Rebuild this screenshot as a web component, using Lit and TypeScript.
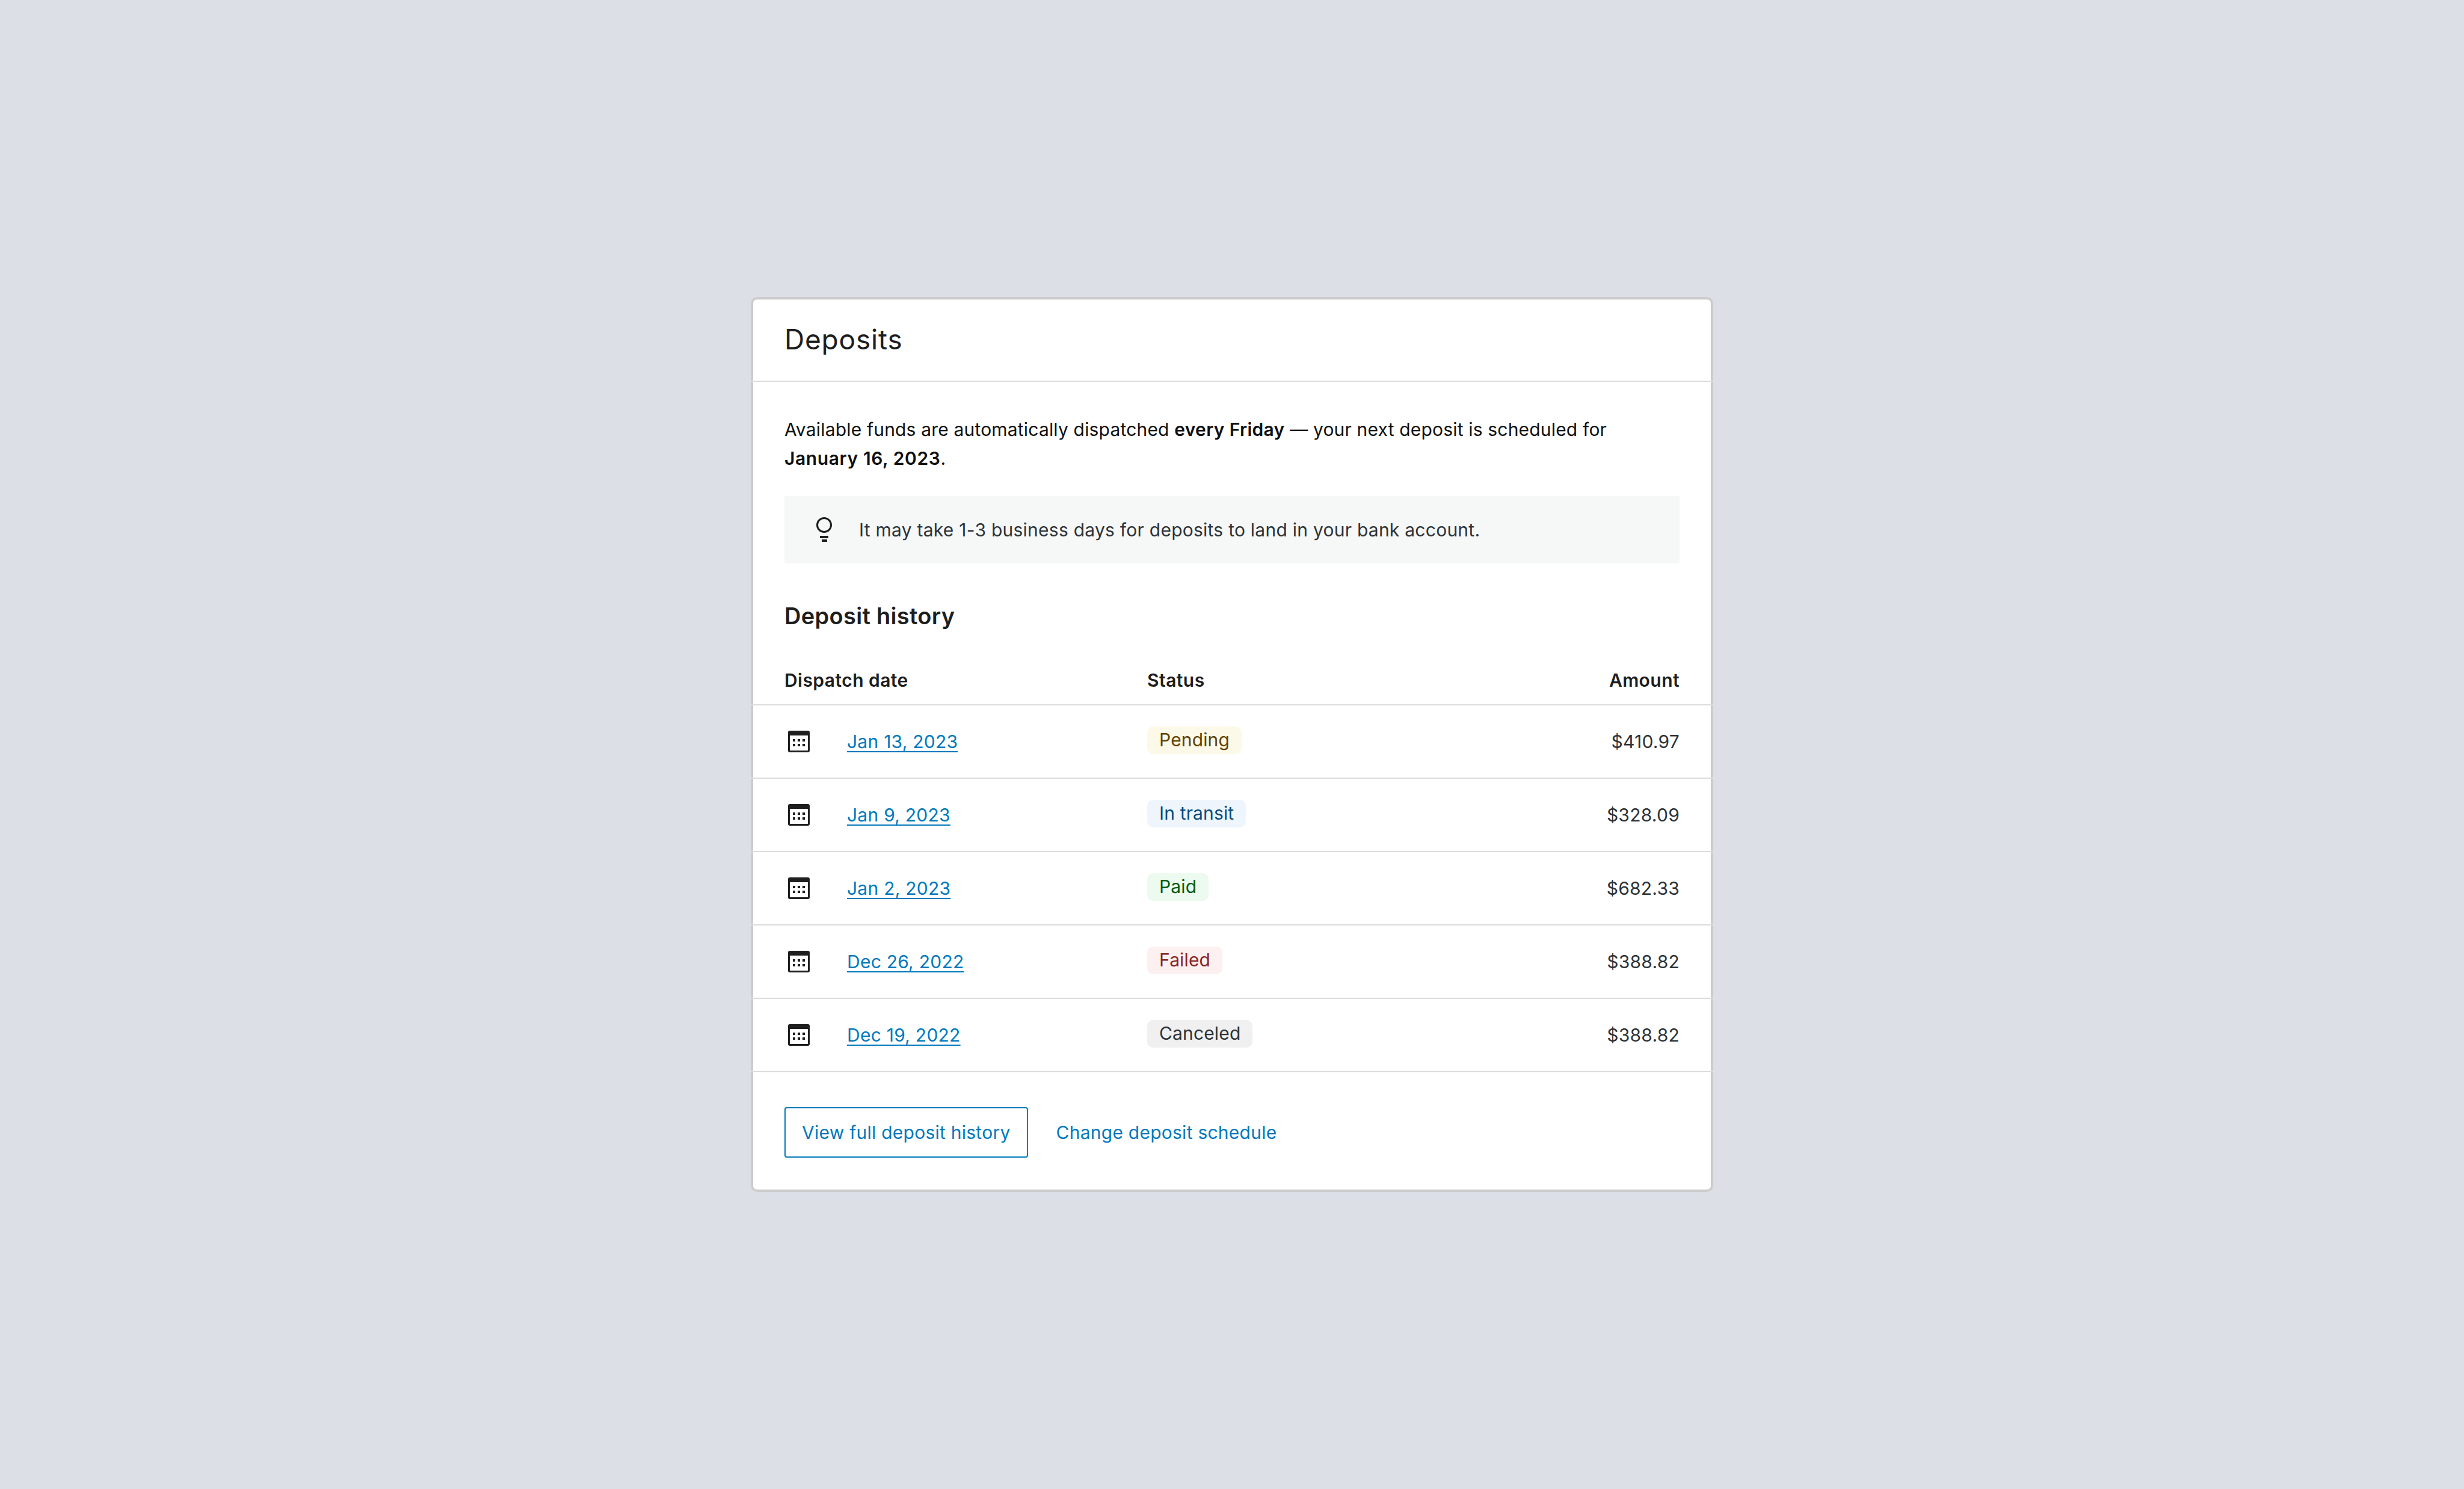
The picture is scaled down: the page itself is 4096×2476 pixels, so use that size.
import { LitElement, html, css, svg } from "lit";
import { customElement } from "lit/decorators.js";

const ROWS = [
  { date: "Jan 13, 2023", status: "Pending", tone: "pending", amount: "$410.97" },
  { date: "Jan 9, 2023", status: "In transit", tone: "transit", amount: "$328.09" },
  { date: "Jan 2, 2023", status: "Paid", tone: "paid", amount: "$682.33" },
  { date: "Dec 26, 2022", status: "Failed", tone: "failed", amount: "$388.82" },
  { date: "Dec 19, 2022", status: "Canceled", tone: "canceled", amount: "$388.82" },
];

const calendar = svg`<svg class="cal" width="48" height="48" viewBox="0 0 48 48" aria-hidden="true">
  <path fill="#1e1e1e" fill-rule="evenodd" d="M9 6h30a3 3 0 0 1 3 3v30a3 3 0 0 1-3 3H9a3 3 0 0 1-3-3V9a3 3 0 0 1 3-3Zm0 8v24.5c0 .3.2.5.5.5h29c.3 0 .5-.2.5-.5V14Z"/>
  <path fill="#1e1e1e" d="M14 20h4v4h-4zM22 20h4v4h-4zM30 20h4v4h-4zM14 28h4v4h-4zM22 28h4v4h-4zM30 28h4v4h-4z"/>
</svg>`;

const bulb = svg`<svg width="48" height="48" viewBox="0 0 48 48" aria-hidden="true">
  <circle cx="24" cy="16" r="11.5" fill="none" stroke="#1e1e1e" stroke-width="3"/>
  <path fill="#1e1e1e" d="M17 34h14v4H17zM20 40h9v4h-9z"/>
</svg>`;

@customElement("app-root")
export class AppRoot extends LitElement {
  static styles = css`
    :host {
      display: flex;
      align-items: center;
      justify-content: center;
      min-height: 100vh;
      background: #dcdfe6;
      font-family: Inter, "Liberation Sans", sans-serif;
      font-size: 30px;
      letter-spacing: 0.25px;
      color: #1e1e1e;
    }
    .card {
      width: 1600px;
      box-sizing: border-box;
      background: #fff;
      border-radius: 10px;
      box-shadow: 0 0 0 4px #ccc inset;
      overflow: hidden;
    }
    .head {
      height: 141px;
      box-sizing: border-box;
      display: flex;
      align-items: center;
      padding: 0 56px;
      border-bottom: 2px solid #dcdcde;
    }
    h1 {
      margin: 0;
      font-size: 46px;
      font-weight: 400;
      letter-spacing: 0.8px;
      line-height: 56px;
    }
    .body { padding: 55px 56px 0; }
    p { margin: 0; line-height: 48px; color: #101010; letter-spacing: 0.18px; }
    b { font-weight: 600; letter-spacing: 0.3px; }
    b.date-strong { letter-spacing: 0.6px; }
    .notice {
      margin-top: 39px;
      height: 112px;
      display: flex;
      align-items: center;
      gap: 34px;
      padding-left: 42px;
      background: #f6f7f7;
      border-radius: 4px;
      color: #2c3338;
    }
    .notice svg { flex: none; }
    h2 {
      margin: 65px 0 0;
      font-size: 38px;
      line-height: 44px;
      font-weight: 600;
      letter-spacing: 0.3px;
    }
    .row {
      display: grid;
      grid-template-columns: 603px 1fr auto;
      align-items: center;
      padding: 0 56px;
      height: 122px;
      box-sizing: border-box;
      border-bottom: 2px solid #dcdcde;
    }
    .row.th {
      height: 127px;
      align-items: end;
      font-weight: 600;
      letter-spacing: 0.45px;
      line-height: 34px;
      padding-bottom: 23px;
    }
    .date { display: flex; align-items: center; gap: 56px; }
    .cal { flex: none; }
    a {
      color: #0079bc;
      text-decoration: none;
    }
    .date a {
      text-decoration: underline;
      text-underline-offset: 5px;
      text-decoration-thickness: 2px;
      text-decoration-skip-ink: none;
    }
    .right { text-align: right; }
    .amount { color: #2c3338; }
    .badge {
      display: inline-block;
      padding: 0 20px;
      height: 46px;
      line-height: 44px;
      border-radius: 10px;
      margin-top: -4px;
      vertical-align: middle;
      letter-spacing: 0.15px;
    }
    .pending { background: #fcf9e8; color: #614200; }
    .transit { background: #eff5fc; color: #044b7f; }
    .paid { background: #edfaef; color: #005c12; }
    .failed { background: #fcf0f1; color: #8a2424; }
    .canceled { background: #f0f0f1; color: #2c3338; }
    .foot {
      display: flex;
      align-items: center;
      gap: 47px;
      padding: 58px 56px 57px;
    }
    .btn {
      display: flex;
      align-items: center;
      height: 84px;
      box-sizing: border-box;
      padding: 0 27px;
      border: 2px solid #0079bc;
      border-radius: 4px;
    }
  `;

  render() {
    return html`<section class="card">
      <header class="head"><h1>Deposits</h1></header>
      <div class="body">
        <p>Available funds are automatically dispatched <b>every Friday</b> — your next deposit is scheduled for <b class="date-strong">January 16, 2023</b>.</p>
        <div class="notice">${bulb}<span>It may take 1-3 business days for deposits to land in your bank account.</span></div>
        <h2>Deposit history</h2>
      </div>
      <div class="row th"><span>Dispatch date</span><span>Status</span><span class="right">Amount</span></div>
      ${ROWS.map(
        (r) => html`<div class="row">
          <span class="date">${calendar}<a href="#">${r.date}</a></span>
          <span><span class="badge ${r.tone}">${r.status}</span></span>
          <span class="right amount">${r.amount}</span>
        </div>`
      )}
      <footer class="foot">
        <a class="btn" href="#">View full deposit history</a>
        <a href="#">Change deposit schedule</a>
      </footer>
    </section>`;
  }
}
